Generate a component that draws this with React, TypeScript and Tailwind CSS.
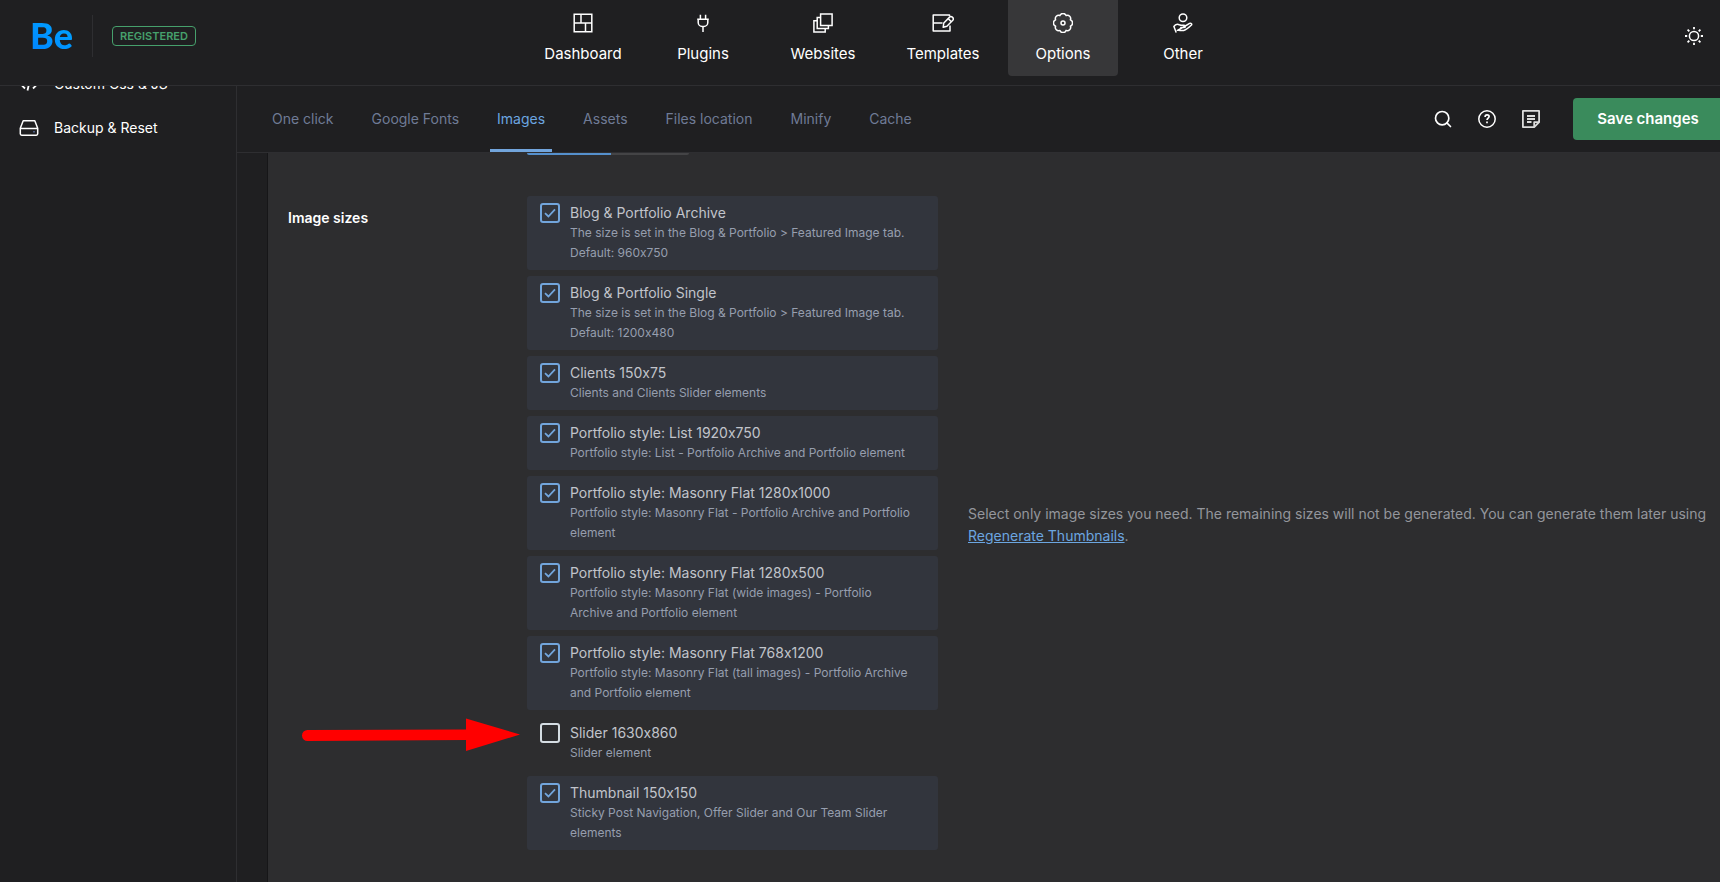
import * as React from "react";
import { Search } from "lucide-react";

interface IconProps {
  className?: string;
}

interface ImageSize {
  id: string;
  title: string;
  description: string;
  enabled: boolean;
  highlighted?: boolean;
}

function DashboardIcon({ className }: IconProps) {
  return (
    <svg viewBox="0 0 20 20" fill="none" stroke="currentColor" strokeWidth="1.5" className={className}>
      <path d="M1.2 1.2h17.6v17.6H1.2zM1.2 10h17.6M8 1.2V10M12.5 10v8.8" />
    </svg>
  );
}

function PluginsIcon({ className }: IconProps) {
  return (
    <svg viewBox="0 0 20 20" fill="none" stroke="currentColor" strokeWidth="1.5" className={className}>
      <path d="M4.2 6.3h11.6M7.4 1.8v4.5M12.6 1.8v4.5M5.2 6.3v3.2a4 4 0 0 0 4 4h1.6a4 4 0 0 0 4-4V6.3M10 13.5V19" />
    </svg>
  );
}

function WebsitesIcon({ className }: IconProps) {
  return (
    <svg viewBox="0 0 20 20" fill="none" stroke="currentColor" strokeWidth="1.5" className={className}>
      <path d="M7.6 1h11.5v11.5H7.6z" />
      <path d="M7.6 4.4H4.2v11.2h11.2v-3.1" />
      <path d="M4.2 7.8H.9v11.3h11.3v-3.5" />
    </svg>
  );
}

function TemplatesIcon({ className }: IconProps) {
  return (
    <svg viewBox="0 0 22 20" fill="none" stroke="currentColor" strokeWidth="1.5" strokeLinejoin="round" className={className}>
      <path d="M17.5 3.2V1.9H1.2v16.2h16.8v-5.6M1.2 10h9.3" />
      <path d="M11.2 14.2l.6-4.2 5.8-5.9a1.9 1.9 0 0 1 2.7 0l.5.5a1.9 1.9 0 0 1 0 2.7l-5.9 5.9zM16.2 5.6l3.1 3.1" />
    </svg>
  );
}

function OptionsIcon({ className }: IconProps) {
  return (
    <svg viewBox="0 0 20 20" fill="none" stroke="currentColor" strokeWidth="1.5" strokeLinejoin="round" className={className}>
      <path d="M17.4 6.9a3.3 3.3 0 0 1 0 6.2 3.3 3.3 0 0 1-4.3 4.3 3.3 3.3 0 0 1-6.2 0 3.3 3.3 0 0 1-4.3-4.3 3.3 3.3 0 0 1 0-6.2 3.3 3.3 0 0 1 4.3-4.3 3.3 3.3 0 0 1 6.2 0 3.3 3.3 0 0 1 4.3 4.3z" />
      <circle cx="10" cy="10" r="2" />
    </svg>
  );
}

function OtherIcon({ className }: IconProps) {
  return (
    <svg viewBox="0 0 20 20" fill="none" stroke="currentColor" strokeWidth="1.5" strokeLinejoin="round" strokeLinecap="round" className={className}>
      <circle cx="10" cy="4.7" r="3.8" />
      <path d="M3 19L.9 13.5c1.4-2.3 3.4-2.700 5.400-1.800l1.500.6H11c1.700 0 1.700 2.200 0 2.200H7.800M12.300 13l4.300-2.600c1.500-.8 2.800.8 1.600 1.900-2.200 2.200-4.700 4.400-7.500 5.100-2.400.5-4.200-.4-6.300-.1z" />
    </svg>
  );
}

function CodeIcon({ className }: IconProps) {
  return (
    <svg viewBox="0 0 20 20" fill="none" stroke="currentColor" strokeWidth="1.8" className={className}>
      <path d="M6 5.500L1.500 10 6 14.500M14 5.500l4.500 4.500-4.500 4.500M11.500 3.500l-3 13" />
    </svg>
  );
}

function DriveIcon({ className }: IconProps) {
  return (
    <svg viewBox="0 0 20 20" fill="none" stroke="currentColor" strokeWidth="1.5" strokeLinejoin="round" className={className}>
      <path d="M4.2 2.700h11.600l2.900 7.600v5.500a1.400 1.400 0 0 1-1.400 1.400H2.700a1.400 1.400 0 0 1-1.400-1.400v-5.500zM1.300 10.500h17.400" />
      <path d="M14.200 13.800h1.600" stroke="#5b6f9c" />
    </svg>
  );
}

function SunIcon({ className }: IconProps) {
  return (
    <svg viewBox="0 0 20 20" fill="none" stroke="currentColor" strokeWidth="1.5" className={className}>
      <circle cx="10" cy="10" r="4.600" />
      <path
        d="M10 1v2.200M10 16.800V19M1 10h2.200M16.800 10H19M3.600 3.600l1.700 1.700M14.700 14.700l1.700 1.700M3.600 16.400l1.700-1.700M14.700 5.300l1.700-1.700"
        strokeWidth="1.800"
      />
    </svg>
  );
}

function HelpIcon({ className }: IconProps) {
  return (
    <svg viewBox="0 0 20 20" fill="none" stroke="currentColor" strokeWidth="1.5" className={className}>
      <circle cx="10" cy="10" r="8.200" />
      <path d="M8.100 7.900c0-2.800 4-2.600 4-.3 0 1.500-2.100 1.600-2.100 3.500M10 12.500v1.700" strokeWidth="1.700" />
    </svg>
  );
}

function NoteIcon({ className }: IconProps) {
  return (
    <svg viewBox="0 0 20 20" fill="none" stroke="currentColor" strokeWidth="1.8" strokeLinejoin="round" className={className}>
      <path d="M1.900 1.900h16.200v11.300l-4.900 4.900H1.900zM18.100 13.200h-4.900v4.900M6 7h8M6 10h8M6 13h4.500" />
    </svg>
  );
}

const navItems = [
  { label: "Dashboard", icon: DashboardIcon },
  { label: "Plugins", icon: PluginsIcon },
  { label: "Websites", icon: WebsitesIcon },
  { label: "Templates", icon: TemplatesIcon },
  { label: "Options", icon: OptionsIcon, active: true },
  { label: "Other", icon: OtherIcon },
];

const sidebarItems = [
  { label: "Custom Css & JS", icon: CodeIcon },
  { label: "Backup & Reset", icon: DriveIcon },
];

const tabs = ["One click", "Google Fonts", "Images", "Assets", "Files location", "Minify", "Cache"];

const imageSizes: ImageSize[] = [
  {
    id: "blog-archive",
    title: "Blog & Portfolio Archive",
    description: "The size is set in the Blog & Portfolio > Featured Image tab.\nDefault: 960x750",
    enabled: true,
  },
  {
    id: "blog-single",
    title: "Blog & Portfolio Single",
    description: "The size is set in the Blog & Portfolio > Featured Image tab.\nDefault: 1200x480",
    enabled: true,
  },
  {
    id: "clients",
    title: "Clients 150x75",
    description: "Clients and Clients Slider elements",
    enabled: true,
  },
  {
    id: "list",
    title: "Portfolio style: List 1920x750",
    description: "Portfolio style: List - Portfolio Archive and Portfolio element",
    enabled: true,
  },
  {
    id: "masonry",
    title: "Portfolio style: Masonry Flat 1280x1000",
    description: "Portfolio style: Masonry Flat - Portfolio Archive and Portfolio element",
    enabled: true,
  },
  {
    id: "masonry-wide",
    title: "Portfolio style: Masonry Flat 1280x500",
    description: "Portfolio style: Masonry Flat (wide images) - Portfolio Archive and Portfolio element",
    enabled: true,
  },
  {
    id: "masonry-tall",
    title: "Portfolio style: Masonry Flat 768x1200",
    description: "Portfolio style: Masonry Flat (tall images) - Portfolio Archive and Portfolio element",
    enabled: true,
  },
  {
    id: "slider",
    title: "Slider 1630x860",
    description: "Slider element",
    enabled: false,
    highlighted: true,
  },
  {
    id: "thumbnail",
    title: "Thumbnail 150x150",
    description: "Sticky Post Navigation, Offer Slider and Our Team Slider elements",
    enabled: true,
  },
];

function Header() {
  return (
    <header className="flex h-[86px] shrink-0 items-start border-b border-[#2e2e31]">
      <div className="flex h-[72px] w-[528px] shrink-0 items-center">
        <a
          href="#"
          className="ml-[30px] w-[62px] bg-linear-to-tr from-[#0080ff] to-[#00b0ff] bg-clip-text pb-0.5 font-['Lato'] text-4xl font-black text-transparent"
        >
          Be
        </a>
        <div className="h-[42px] w-px bg-[#2e2e31]" />
        <span className="ml-[19px] rounded border border-[#46a06c] px-[7px] text-[11px] leading-[18px] font-semibold text-[#46a06c]">
          REGISTERED
        </span>
      </div>
      <nav className="flex gap-2.5">
        {navItems.map(({ label, icon: Icon, active }) => (
          <a
            key={label}
            href="#"
            className={`flex w-[110px] flex-col items-center gap-[11px] rounded-b pt-[13px] pb-3 text-[15px] leading-5 text-white ${
              active ? "bg-[#373739]" : ""
            }`}
          >
            <Icon className="h-5" />
            {label}
          </a>
        ))}
      </nav>
      <button type="button" aria-label="Toggle theme" className="mr-4 ml-auto flex h-[72px] items-center text-white">
        <SunIcon className="size-5" />
      </button>
    </header>
  );
}

function Sidebar() {
  return (
    <aside className="w-[237px] shrink-0 overflow-hidden border-r border-[#2e2e31]">
      {/* list is scrolled, first entry sits partly under the header */}
      <nav className="-mt-6 flex flex-col">
        {sidebarItems.map(({ label, icon: Icon }) => (
          <a key={label} href="#" className="flex h-11 items-center gap-[15px] pl-[19px] text-sm text-white">
            <Icon className="size-5" />
            {label}
          </a>
        ))}
      </nav>
    </aside>
  );
}

function TabBar() {
  return (
    <div className="flex h-[67px] shrink-0 items-center border-b border-[#2e2e31] pl-7">
      <nav className="flex gap-6 self-stretch">
        {tabs.map((tab) => (
          <a
            key={tab}
            href="#"
            className={`flex items-center border-y-3 border-t-transparent px-[7px] text-sm ${
              tab === "Images" ? "border-b-[#72a5dc] text-[#6ca6e0]" : "border-b-transparent text-[#6f7b96]"
            }`}
          >
            {tab}
          </a>
        ))}
      </nav>
      <div className="ml-auto flex items-center text-white">
        <button type="button" aria-label="Search" className="flex w-11 justify-center">
          <Search size={20} strokeWidth={2} />
        </button>
        <button type="button" aria-label="Help" className="flex w-11 justify-center">
          <HelpIcon className="size-5" />
        </button>
        <button type="button" aria-label="Notes" className="flex w-11 justify-center text-[#dcdcdc]">
          <NoteIcon className="size-5" />
        </button>
        <button
          type="button"
          className="-mr-[3px] ml-5 h-[42px] w-[150px] rounded bg-[#3a8b5c] text-[15px] font-semibold"
        >
          Save changes
        </button>
      </div>
    </div>
  );
}

function Arrow() {
  return (
    <svg width="220" height="36" viewBox="0 0 220 36" fill="#ff0000" className="absolute top-0 right-full mr-1.5">
      <path d="M6.500 14L165 13.500V2.500L219 18.500 165 35V24L6.500 25a5.500 5.500 0 0 1 0-11z" />
    </svg>
  );
}

function SizeOption({ size }: { size: ImageSize }) {
  return (
    <li className="relative">
      <label className="flex gap-2.5 rounded-[3px] py-[7px] pr-6 pl-[13px] has-checked:bg-[#32353d]">
        <span className="grid size-5 shrink-0 place-items-center">
          <input
            type="checkbox"
            defaultChecked={size.enabled}
            className="peer col-start-1 row-start-1 size-5 appearance-none rounded-[3px] border-2 border-[#d5dde3] checked:border-[#72a5dc]"
          />
          <svg
            viewBox="0 0 12 10"
            fill="none"
            stroke="#72a5dc"
            strokeWidth="1.8"
            className="pointer-events-none invisible col-start-1 row-start-1 w-3 peer-checked:visible"
          >
            <path d="M1 5.200l3.400 3.300L11 1.300" />
          </svg>
        </span>
        <span className="flex-1">
          <span className="block text-sm leading-5 text-[#c1c4cb]">{size.title}</span>
          <span className="block text-xs leading-5 whitespace-pre-line text-[#969eae]">{size.description}</span>
        </span>
      </label>
      {size.highlighted && <Arrow />}
    </li>
  );
}

export default function App() {
  return (
    <div className="flex h-screen flex-col overflow-hidden bg-[#1f1f21] font-['Inter',sans-serif] antialiased [font-feature-settings:'calt'_0]">
      <Header />
      <div className="flex min-h-0 flex-1">
        <Sidebar />
        <main className="flex min-w-0 flex-1 flex-col">
          <TabBar />
          <section className="ml-[30px] flex-1 overflow-hidden border-l border-[#161618] bg-[#2d2d2f] pl-5">
            {/* bottom edge of the segmented switch above */}
            <div className="ml-[239px] flex">
              <div className="h-0.5 w-[84px] rounded-bl bg-[#5590cd]" />
              <div className="h-0.5 w-[78px] rounded-br bg-[#444446]" />
            </div>
            <div className="mt-[41px] flex">
              <h3 className="mt-3 w-[239px] shrink-0 text-sm leading-5 font-semibold text-white">Image sizes</h3>
              <ul className="flex w-[411px] shrink-0 flex-col gap-1.5">
                {imageSizes.map((size) => (
                  <SizeOption key={size.id} size={size} />
                ))}
              </ul>
              <p className="ml-[30px] flex-1 self-center pt-1 pr-2 text-sm leading-[22px] text-[#94969c]">
                Select only image sizes you need. The remaining sizes will not be generated. You can generate them later
                using{" "}
                <a href="#" className="text-[#6ca6e0] underline">
                  Regenerate Thumbnails
                </a>
                .
              </p>
            </div>
          </section>
        </main>
      </div>
    </div>
  );
}
